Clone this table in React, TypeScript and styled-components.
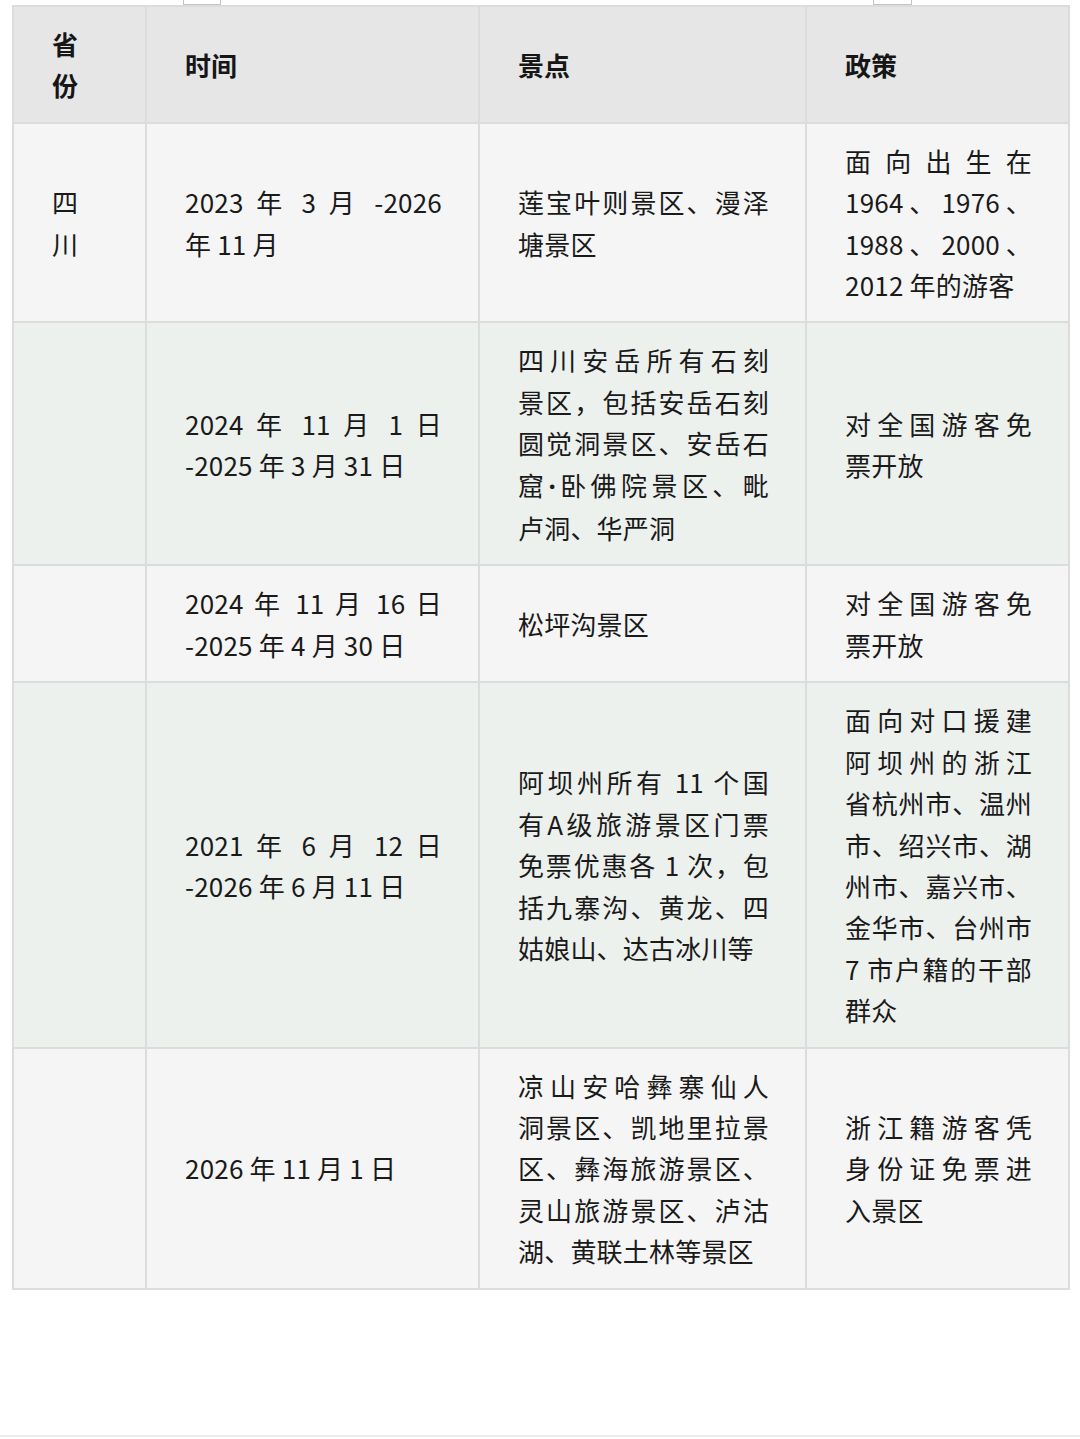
import React from "react";
import styled, { createGlobalStyle } from "styled-components";

const GlobalStyle = createGlobalStyle`
  html, body {
    margin: 0;
    padding: 0;
    background: #ffffff;
  }
  body {
    font-family: "Noto Sans CJK SC", "Noto Sans", sans-serif;
    color: #1a1a1a;
  }
`;

const Page = styled.div`
  width: 1080px;
  min-height: 1439px;
  box-sizing: border-box;
  padding: 0 12px;
  display: flex;
  flex-direction: column;
`;

const TopStrip = styled.div`
  height: 5px;
  display: flex;
  align-items: flex-start;
`;

const Mark = styled.div<{ $left: number; $width: number }>`
  margin-left: ${(p) => p.$left}px;
  width: ${(p) => p.$width}px;
  height: 5px;
  box-sizing: border-box;
  border: 1px solid #c4c4c4;
  border-top: none;
`;

const Table = styled.table`
  width: 1056px;
  border-collapse: collapse;
  table-layout: fixed;
  font-size: 26px;
  line-height: 41.4px;
`;

const HeadCell = styled.th`
  background: #e6e6e6;
  border: 2px solid #dcdcdc;
  padding: 16px 34px 16px 38px;
  text-align: left;
  vertical-align: middle;
  font-weight: 700;
  color: #161616;
`;

const Row = styled.tr<{ $tint: "plain" | "green" }>`
  background: ${(p) => (p.$tint === "green" ? "#edf1ee" : "#f5f5f5")};
`;

const Cell = styled.td`
  border: 2px solid #dcdcdc;
  padding: 16px 36px 16px 38px;
  vertical-align: middle;
  color: #1a1a1a;
  letter-spacing: 0.2px;
`;

const Line = styled.div<{ $last: boolean }>`
  text-align: justify;
  text-align-last: ${(p) => (p.$last ? "left" : "justify")};
  text-justify: inter-character;
`;

const Dot = styled.span`
  font-family: "Noto Sans", "DejaVu Sans", sans-serif;
  font-weight: 700;
`;

type Tint = "plain" | "green";

const headers: string[][] = [["省", "份"], ["时间"], ["景点"], ["政策"]];

const rows: { tint: Tint; cells: string[][] }[] = [
  {
    tint: "plain",
    cells: [
      ["四", "川"],
      ["2023 年 3 月 -2026", "年 11 月"],
      ["莲宝叶则景区、漫泽", "塘景区"],
      ["面向出生在", "1964、1976、", "1988、2000、", "2012 年的游客"],
    ],
  },
  {
    tint: "green",
    cells: [
      [],
      ["2024 年 11 月 1 日", "-2025 年 3 月 31 日"],
      [
        "四川安岳所有石刻",
        "景区，包括安岳石刻",
        "圆觉洞景区、安岳石",
        "窟·卧佛院景区、毗",
        "卢洞、华严洞",
      ],
      ["对全国游客免", "票开放"],
    ],
  },
  {
    tint: "plain",
    cells: [
      [],
      ["2024 年 11 月 16 日", "-2025 年 4 月 30 日"],
      ["松坪沟景区"],
      ["对全国游客免", "票开放"],
    ],
  },
  {
    tint: "green",
    cells: [
      [],
      ["2021 年 6 月 12 日", "-2026 年 6 月 11 日"],
      [
        "阿坝州所有 11 个国",
        "有A级旅游景区门票",
        "免票优惠各 1 次，包",
        "括九寨沟、黄龙、四",
        "姑娘山、达古冰川等",
      ],
      [
        "面向对口援建",
        "阿坝州的浙江",
        "省杭州市、温州",
        "市、绍兴市、湖",
        "州市、嘉兴市、",
        "金华市、台州市",
        "7 市户籍的干部",
        "群众",
      ],
    ],
  },
  {
    tint: "plain",
    cells: [
      [],
      ["2026 年 11 月 1 日"],
      [
        "凉山安哈彝寨仙人",
        "洞景区、凯地里拉景",
        "区、彝海旅游景区、",
        "灵山旅游景区、泸沽",
        "湖、黄联土林等景区",
      ],
      ["浙江籍游客凭", "身份证免票进", "入景区"],
    ],
  },
];

const BottomArea = styled.div`
  height: 145px;
  border-bottom: 2px solid #ececec;
  margin: 0 -12px;
`;

const renderText = (text: string) => {
  const parts = text.split("·");
  return parts.map((p, i) => (
    <React.Fragment key={i}>
      {p}
      {i < parts.length - 1 && <Dot>·</Dot>}
    </React.Fragment>
  ));
};

const Lines: React.FC<{ lines: string[] }> = ({ lines }) => (
  <>
    {lines.map((l, i) => (
      <Line key={i} $last={i === lines.length - 1}>
        {renderText(l)}
      </Line>
    ))}
  </>
);

export default function App() {
  return (
    <>
      <GlobalStyle />
      <Page>
        <TopStrip>
          <Mark $left={171} $width={38} />
          <Mark $left={652} $width={39} />
        </TopStrip>
        <Table>
          <colgroup>
            <col style={{ width: 133 }} />
            <col style={{ width: 333 }} />
            <col style={{ width: 327 }} />
            <col style={{ width: 263 }} />
          </colgroup>
          <thead>
            <tr>
              {headers.map((h, i) => (
                <HeadCell key={i}>
                  <Lines lines={h} />
                </HeadCell>
              ))}
            </tr>
          </thead>
          <tbody>
            {rows.map((r, ri) => (
              <Row key={ri} $tint={r.tint}>
                {r.cells.map((c, ci) => (
                  <Cell key={ci}>
                    <Lines lines={c} />
                  </Cell>
                ))}
              </Row>
            ))}
          </tbody>
        </Table>
        <BottomArea />
      </Page>
    </>
  );
}
